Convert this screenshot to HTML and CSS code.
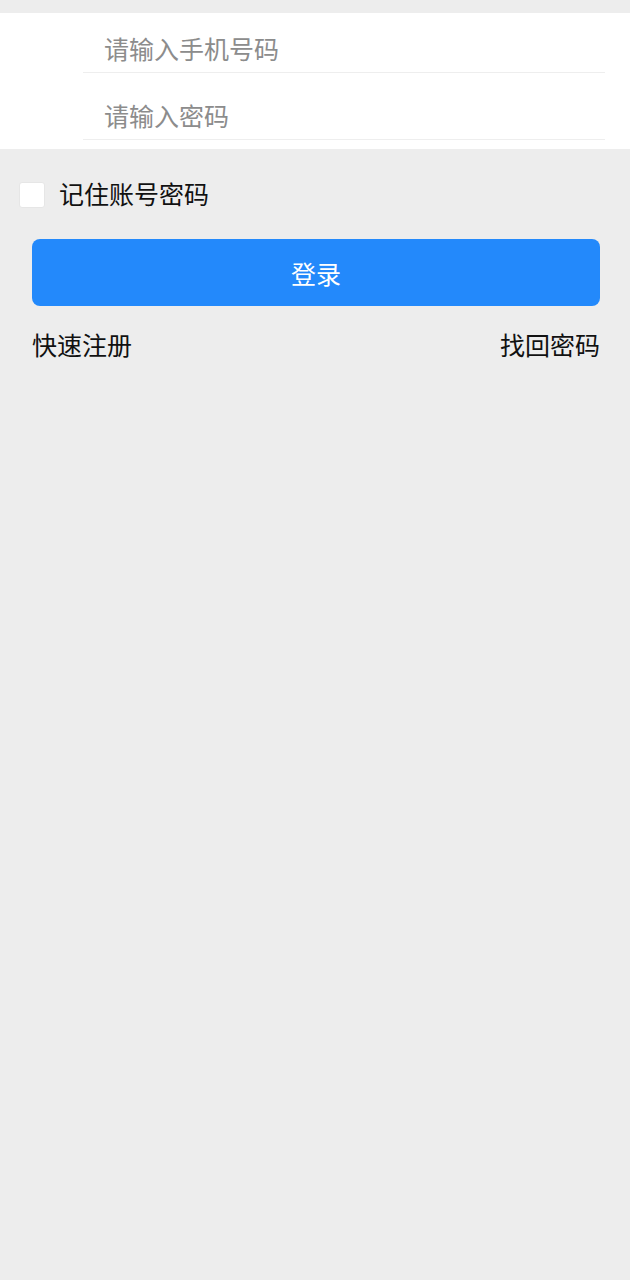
FILE: index.html
```html
<!DOCTYPE html>
<html lang="zh">
<head>
<meta charset="utf-8">
<title>登录</title>
<link rel="stylesheet" href="styles.css">
</head>
<body>
<div class="top-gap"></div>
<div class="form">
  <div class="field field-phone"><span class="placeholder">请输入手机号码</span></div>
  <div class="field field-pwd"><span class="placeholder">请输入密码</span></div>
</div>
<label class="remember">
  <span class="checkbox"></span>
  <span class="remember-text">记住账号密码</span>
</label>
<div class="btn-wrap">
  <div class="login-btn">登录</div>
</div>
<div class="links">
  <span class="link">快速注册</span>
  <span class="link">找回密码</span>
</div>
</body>
</html>
```
FILE: styles.css
```css
html, body {
  margin: 0;
  padding: 0;
  background: #ededed;
  font-family: "Noto Sans CJK SC", "Noto Sans", sans-serif;
  font-size: 25px;
  color: #111;
}
.top-gap {
  height: 13px;
}
.form {
  background: #fff;
  padding: 0 25px 9px 83px;
}
.field {
  box-sizing: border-box;
  display: flex;
  align-items: flex-end;
  padding: 0 0 11px 21px;
  border-bottom: 1px solid #eeeeee;
  line-height: 26px;
}
.field-phone { height: 60px; }
.field-pwd { height: 67px; }
.placeholder {
  color: #8c8c8c;
}
.remember {
  display: flex;
  align-items: center;
  height: 48px;
  padding: 20px 0 0 19px;
  line-height: 26px;
}
.checkbox {
  box-sizing: border-box;
  width: 26px;
  height: 26px;
  margin-top: 3px;
  background: #fff;
  border: 1px solid #e6e6e6;
  border-radius: 3px;
  margin-right: 14px;
}
.remember-text {
  color: #111;
}
.btn-wrap {
  padding: 22px 30px 0 32px;
}
.login-btn {
  height: 67px;
  background: #2389fb;
  border-radius: 8px;
  color: #fff;
  display: flex;
  align-items: center;
  justify-content: center;
}
.links {
  display: flex;
  justify-content: space-between;
  padding: 22px 30px 0 32px;
  line-height: 32px;
}
.link {
  color: #111;
}
```
